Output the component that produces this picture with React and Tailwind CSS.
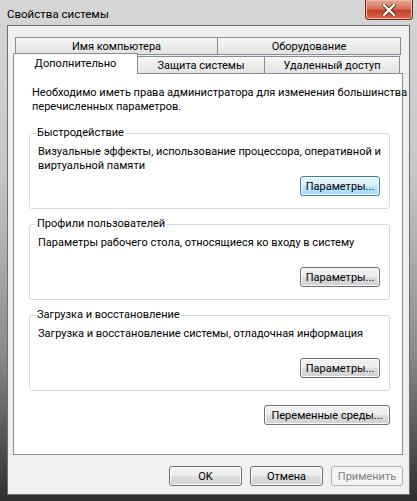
import React from "react";

const font = "font-['Roboto','Liberation_Sans',Arial,sans-serif]";

const btn =
  "h-[20px] rounded-[3px] border border-[#707070] bg-[linear-gradient(#f3f3f3_0%,#ececec_49%,#dedede_50%,#d0d0d0_100%)] shadow-[inset_0_0_0_1px_#fbfbfb] text-[11px] leading-none text-black whitespace-nowrap";

const btnBlue =
  "h-[20px] rounded-[3px] border border-[#3c7fb1] bg-[linear-gradient(#eaf6fd_0%,#d9f0fc_49%,#bee6fd_50%,#a7d9f5_100%)] shadow-[inset_0_0_0_1px_#f4fbff] text-[11px] leading-none text-black whitespace-nowrap";

const tabOff =
  "flex items-center justify-center border border-[#898c95] bg-[linear-gradient(#f7f7f7,#e3e3e3)] text-[11px] leading-none whitespace-nowrap";

function Group({ title, text, primary }) {
  return (
    <fieldset className="min-w-0 rounded-[3px] border border-[#d5dcdf] pl-[8px] pr-[9px] pb-[12px]">
      <legend className="ml-[-2px] px-[1px] leading-[14px]">{title}</legend>
      <div className="h-[33px] pt-[5px] leading-[14px] whitespace-nowrap">
        {text.map((t) => (
          <div key={t}>{t}</div>
        ))}
      </div>
      <div className="mt-[3px] flex justify-end">
        <button className={`${primary ? btnBlue : btn} w-[80px]`}>Параметры...</button>
      </div>
    </fieldset>
  );
}

export default function App() {
  return (
    <div
      className={`flex h-[501px] w-[417px] flex-col bg-[linear-gradient(180deg,#d6d6d6_0%,#c6c6c6_35%,#8c8c8c_70%,#2e2e2e_100%)] text-[11px] text-black ${font}`}
    >
      {/* title bar */}
      <div className="flex h-[25px] shrink-0 items-start justify-between">
        <div className="pl-[7px] pt-[7px] text-[11.5px] leading-[14px] text-black">Свойства системы</div>
        <div className="mr-[4px] flex h-[20px] w-[48px] items-center justify-center rounded-b-[4px] border border-t-0 border-[#6e2516] bg-[linear-gradient(#e9a797_0%,#d5735d_45%,#c4402a_55%,#d86a4e_100%)] shadow-[inset_0_0_0_1px_#f0b8a8]">
          <svg width="14" height="12" viewBox="0 0 14 12">
            <path d="M2 1 L12 11 M12 1 L2 11" stroke="#5a2219" strokeWidth="4" strokeLinecap="square" />
            <path d="M2 1 L12 11 M12 1 L2 11" stroke="#ffffff" strokeWidth="2.4" strokeLinecap="square" />
          </svg>
        </div>
      </div>

      {/* client area */}
      <div className="mx-[7px] h-[470px] shrink-0 border border-[#6f6f6f] bg-[#f0f0f0] pl-[5px] pr-[6px] pt-[11px]">
        {/* tabs */}
        <div className="h-[36px]">
          <div className="ml-[2px] flex h-[18px]">
            <div className={`${tabOff} w-[203px]`}>Имя компьютера</div>
            <div className={`${tabOff} -ml-[1px] w-[184px]`}>Оборудование</div>
          </div>
          <div className="relative z-10 -mt-[2px] flex h-[20px] items-end">
            <div className="-mb-[1px] flex h-[21px] w-[125px] items-center justify-center border border-b-0 border-[#898c95] bg-white pb-[2px] leading-none">
              Дополнительно
            </div>
            <div className={`${tabOff} h-[17px] w-[128px] border-b-0 -ml-[1px]`}>Защита системы</div>
            <div className={`${tabOff} h-[17px] w-[136px] border-b-0 -ml-[1px]`}>Удаленный доступ</div>
          </div>
        </div>

        {/* panel */}
        <div className="h-[382px] border border-[#898c95] bg-white pl-[15px] pr-[12px] pt-[12px]">
          <div className="ml-[3px] leading-[14px] whitespace-nowrap">
            <div>Необходимо иметь права администратора для изменения большинства</div>
            <div>перечисленных параметров.</div>
          </div>
          <div className="mt-[12px] flex flex-col gap-[8px]">
            <Group
              title="Быстродействие"
              text={["Визуальные эффекты, использование процессора, оперативной и", "виртуальной памяти"]}
              primary
            />
            <Group title="Профили пользователей" text={["Параметры рабочего стола, относящиеся ко входу в систему"]} />
            <Group title="Загрузка и восстановление" text={["Загрузка и восстановление системы, отладочная информация"]} />
          </div>
          <div className="mt-[14px] flex justify-end">
            <button className={`${btn} w-[126px]`}>Переменные среды...</button>
          </div>
        </div>

        {/* dialog buttons */}
        <div className="mt-[11px] flex justify-end gap-[8px]">
          <button className={`${btn} w-[73px]`}>OK</button>
          <button className={`${btn} w-[73px]`}>Отмена</button>
          <button className="h-[20px] w-[72px] rounded-[3px] border border-[#adb2b5] bg-[#f4f4f4] text-[11px] leading-none text-[#838383]">
            Применить
          </button>
        </div>
      </div>
    </div>
  );
}
